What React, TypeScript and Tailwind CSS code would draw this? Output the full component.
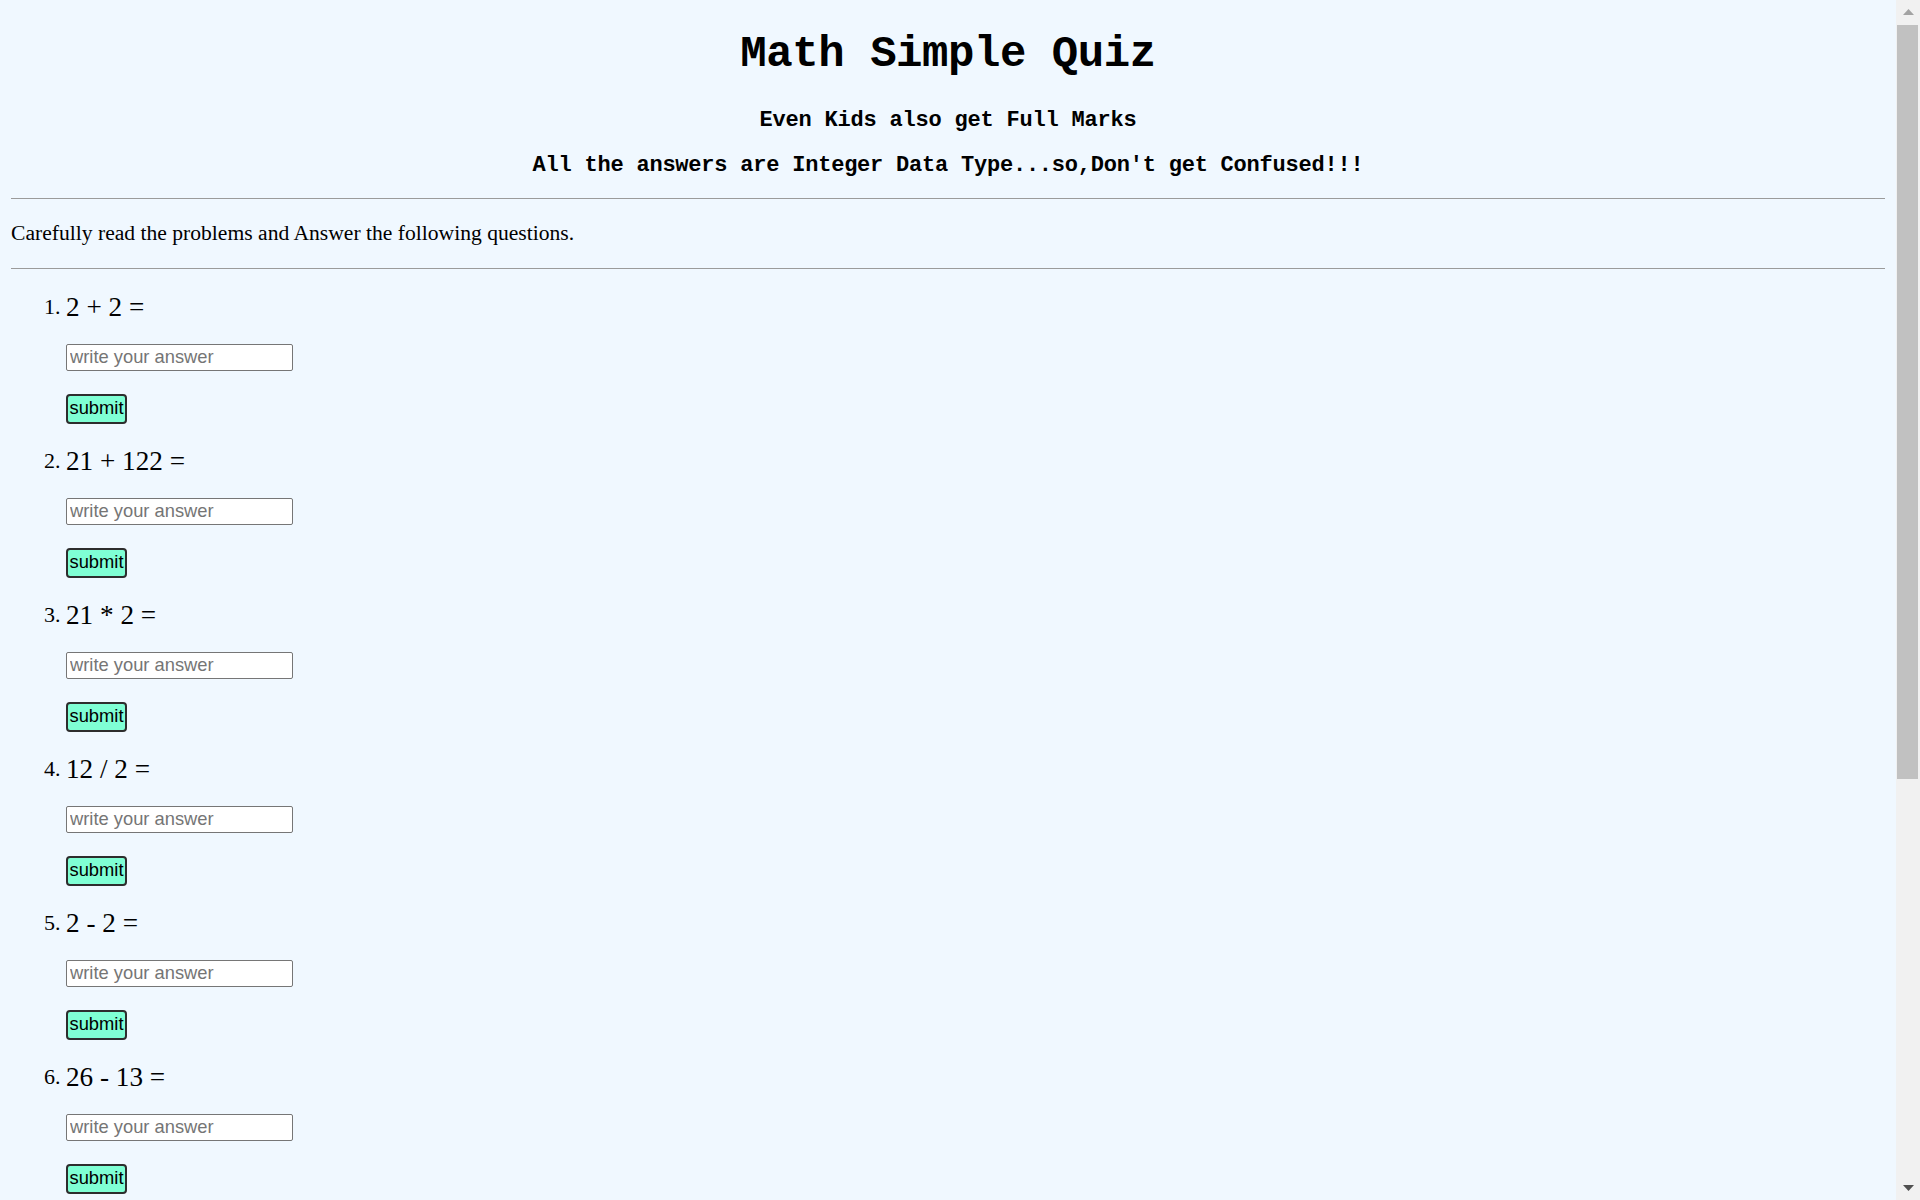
import React from "react";

const questions = [
  "2 + 2 =",
  "21 + 122 =",
  "21 * 2 =",
  "12 / 2 =",
  "2 - 2 =",
  "26 - 13 =",
];

export default function App() {
  return (
    <div className="flex h-[1200px] w-full overflow-hidden bg-[#f0f8ff] text-black">
      <main className="min-w-0 flex-1 overflow-hidden px-[11px] pt-[24.3px] font-['Liberation_Serif','Times_New_Roman',serif]">
        <h1 className="h-[60px] text-center font-['Liberation_Mono','Courier_New',monospace] text-[44px] font-bold leading-[60px] tracking-[-0.45px]">
          Math Simple Quiz
        </h1>
        <h4 className="mt-[21.35px] h-[30px] text-center font-['Liberation_Mono','Courier_New',monospace] text-[22px] font-bold leading-[30px] tracking-[-0.2px]">
          Even Kids also get Full Marks
        </h4>
        <h4 className="mt-[15px] h-[30px] text-center font-['Liberation_Mono','Courier_New',monospace] text-[22px] font-bold leading-[30px] tracking-[-0.22px]">
          All the answers are Integer Data Type...so,Don't get Confused!!!
        </h4>
        <div className="mt-[17.35px] h-px bg-[#9b9b9b]" />
        <p className="mt-[19.3px] h-[30px] text-[21.6px] leading-[30px]">
          Carefully read the problems and Answer the following questions.
        </p>
        <div className="mt-[19.7px] h-px bg-[#9b9b9b]" />
        <ol className="mt-[19.7px] flex flex-col gap-[19px]">
          {questions.map((q, i) => (
            <li key={i} className="flex">
              <div className="flex h-[36px] w-[55px] shrink-0 items-baseline justify-end pr-[5.5px] text-[22px] leading-[36px]">
                {i + 1}.
              </div>
              <div className="flex flex-col items-start">
                <div className="h-[36px] text-[27.2px] leading-[36px]">{q}</div>
                <input
                  type="text"
                  placeholder="write your answer"
                  className="mt-[19px] box-border h-[27px] w-[227px] rounded-[2px] border border-[#767676] bg-white px-[3px] font-['Liberation_Sans',Arial,sans-serif] text-[18.33px] text-black outline-none placeholder:text-[#757575]"
                />
                <button
                  type="button"
                  className="mt-[23px] box-border flex h-[30px] w-[61px] items-center justify-center rounded-[4px] border-2 border-[#2d2d2d] bg-[#7fffd4] p-0 font-['Liberation_Sans',Arial,sans-serif] text-[18.33px] leading-none text-black"
                >
                  submit
                </button>
              </div>
            </li>
          ))}
        </ol>
      </main>
      <div className="flex h-full w-[24px] shrink-0 flex-col bg-[#f1f1f1]">
        <div className="flex h-[24px] items-center justify-center pl-[1px]">
          <svg width="11" height="6" viewBox="0 0 11 6">
            <polygon points="5.5,0 11,6 0,6" fill="#a3a3a3" />
          </svg>
        </div>
        <div className="ml-[1px] mr-[2px] mt-[1px] h-[754px] bg-[#c1c1c1]" />
        <div className="flex-1" />
        <div className="flex h-[24px] items-center justify-center pl-[1px]">
          <svg width="11" height="6" viewBox="0 0 11 6">
            <polygon points="0,0 11,0 5.5,6" fill="#505050" />
          </svg>
        </div>
      </div>
    </div>
  );
}
